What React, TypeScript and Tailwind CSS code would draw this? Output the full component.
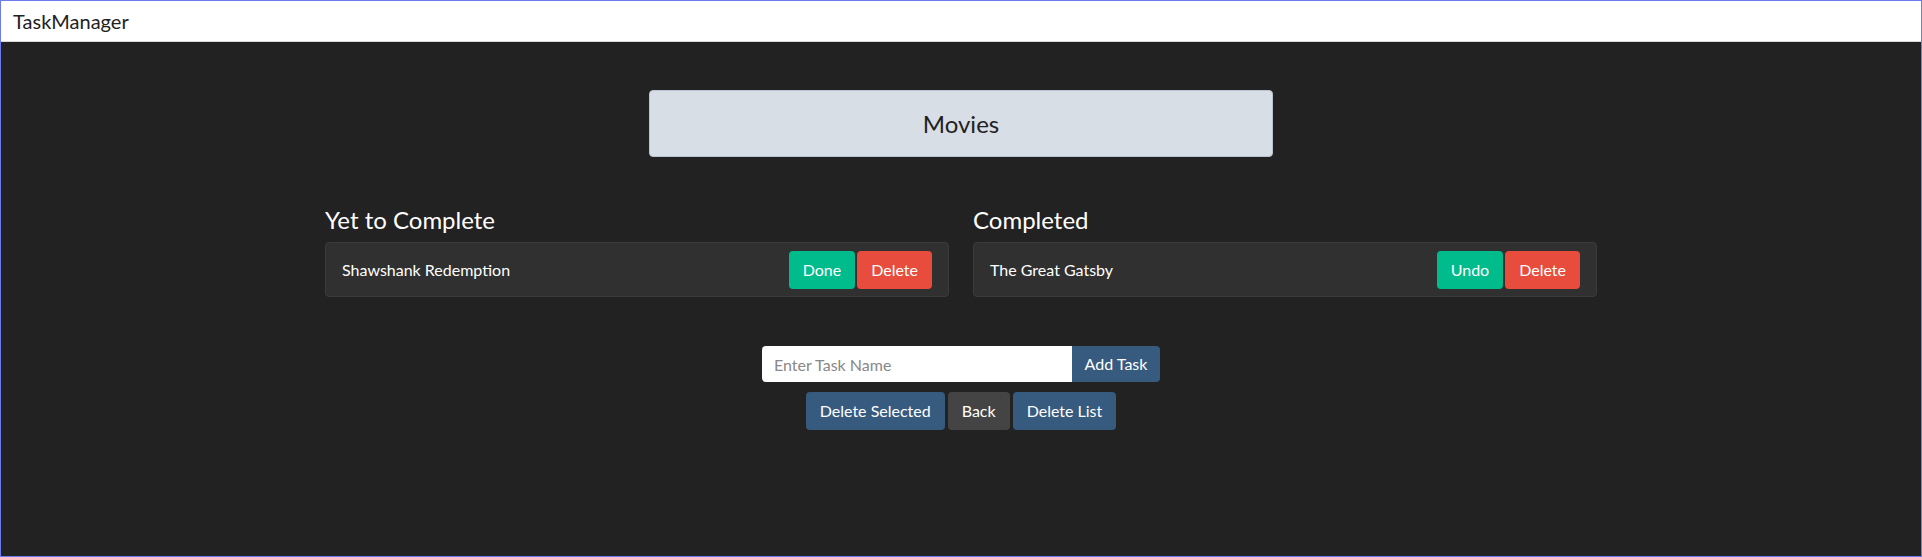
import { useState } from 'react';

interface Task {
  id: number;
  name: string;
}

export default function App() {
  const [pending] = useState<Task[]>([{ id: 1, name: 'Shawshank Redemption' }]);
  const [done] = useState<Task[]>([{ id: 2, name: 'The Great Gatsby' }]);
  const [taskName, setTaskName] = useState('');

  const btn = 'h-[38px] px-[13px] border border-transparent rounded-[4px] text-[16px] text-white leading-none';

  return (
    <div
      className="w-full h-[557px] flex flex-col border border-[#6a7cf0] bg-[#222222] text-white"
      style={{ fontFamily: 'Lato, "Open Sans", sans-serif' }}
    >
      <div className="h-[41px] shrink-0 bg-white border-b border-[#d9d9d9] flex items-center px-3">
        <span className="text-[20px] text-[#222222]">TaskManager</span>
      </div>

      <div className="flex-1 flex flex-col items-center">
        <div className="mt-[48px] w-[624px] h-[67px] rounded-[4px] bg-[#d7dee6] border border-[#b8c4d1] flex items-center justify-center">
          <span className="text-[24px] text-[#222222]">Movies</span>
        </div>

        <div className="mt-[48px] w-[1272px] grid grid-cols-2 gap-6">
          <div>
            <h4 className="text-[24px] leading-[29px] mb-[8px]">Yet to Complete</h4>
            {pending.map((t) => (
              <div
                key={t.id}
                className="h-[55px] rounded-[4px] border border-[#3b3b3b] bg-[#303030] flex items-center justify-between pl-4 pr-4"
              >
                <span className="text-[16px]">{t.name}</span>
                <div className="flex gap-[2px]">
                  <button className={`${btn} bg-[#00bc8c]`}>Done</button>
                  <button className={`${btn} bg-[#e74c3c]`}>Delete</button>
                </div>
              </div>
            ))}
          </div>
          <div>
            <h4 className="text-[24px] leading-[29px] mb-[8px]">Completed</h4>
            {done.map((t) => (
              <div
                key={t.id}
                className="h-[55px] rounded-[4px] border border-[#3b3b3b] bg-[#303030] flex items-center justify-between pl-4 pr-4"
              >
                <span className="text-[16px]">{t.name}</span>
                <div className="flex gap-[2px]">
                  <button className={`${btn} bg-[#00bc8c]`}>Undo</button>
                  <button className={`${btn} bg-[#e74c3c]`}>Delete</button>
                </div>
              </div>
            ))}
          </div>
        </div>

        <div className="mt-[49px] flex">
          <input
            value={taskName}
            onChange={(e) => setTaskName(e.target.value)}
            placeholder="Enter Task Name"
            className="w-[310px] h-[36px] bg-white rounded-l-[4px] px-3 text-[16px] text-[#222222] placeholder:text-[#888888] outline-none"
          />
          <button className="h-[36px] w-[88px] rounded-r-[4px] bg-[#375a7f] text-[16px] text-white">Add Task</button>
        </div>

        <div className="mt-[10px] flex gap-[3px]">
          <button className={`${btn} h-[37px] bg-[#375a7f]`}>Delete Selected</button>
          <button className={`${btn} h-[37px] bg-[#444444]`}>Back</button>
          <button className={`${btn} h-[37px] bg-[#375a7f]`}>Delete List</button>
        </div>
      </div>
    </div>
  );
}
